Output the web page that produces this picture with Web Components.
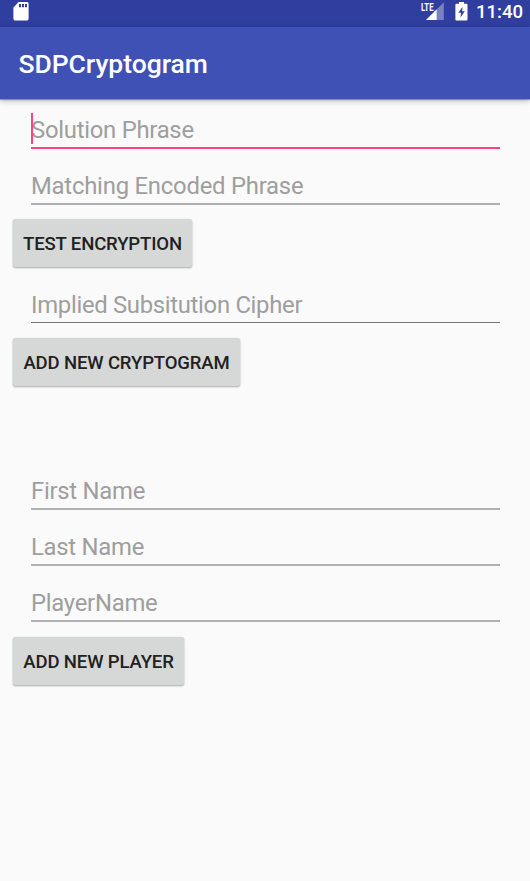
<!DOCTYPE html>
<html lang="en">
<head>
<meta charset="utf-8">
<title>SDPCryptogram</title>
<style>
html,body{margin:0;height:100%;background:#fafafa;font-family:Roboto,"Liberation Sans",sans-serif;overflow:hidden}
</style>
</head>
<body>
<app-screen>
  <status-bar slot="status" time="11:40"></status-bar>
  <app-bar slot="bar">SDPCryptogram</app-bar>
  <text-field focused>Solution Phrase</text-field>
  <text-field style="--ls:-.22px">Matching Encoded Phrase</text-field>
  <raised-button style="--w:179px">TEST ENCRYPTION</raised-button>
  <text-field style="--line:#757575;--lh:1px;--ls:-.3px">Implied Subsitution Cipher</text-field>
  <raised-button style="--w:227px">ADD NEW CRYPTOGRAM</raised-button>
  <form-gap></form-gap>
  <text-field>First Name</text-field>
  <text-field>Last Name</text-field>
  <text-field>PlayerName</text-field>
  <raised-button style="--w:171px;--top:9px">ADD NEW PLAYER</raised-button>
</app-screen>
<script>
const define = (name, html, setup) => {
  const template = document.createElement('template');
  template.innerHTML = html;
  customElements.define(name, class extends HTMLElement {
    constructor() {
      super();
      this.attachShadow({mode: 'open'}).append(template.content.cloneNode(true));
      if (setup) setup(this);
    }
  });
};

define('app-screen', `
<style>
:host{display:flex;flex-direction:column;width:530px;height:881px;background:#fafafa}
main{display:flex;flex-direction:column;align-items:stretch}
</style>
<slot name="status"></slot><slot name="bar"></slot><main><slot></slot></main>`);

define('status-bar', `
<style>
:host{display:flex;height:26.5px;background:#303f9f;color:#fff;padding:0 7px 0 13px;box-sizing:border-box;align-items:flex-start}
svg{display:block;flex:none;overflow:visible}
.sd{margin-top:2px}
.signal{margin:1px 11px 0 auto}
.battery{margin:2px 8px 0 0}
time{font-size:18.6px;font-weight:500;line-height:24px;width:47px;white-space:nowrap;letter-spacing:-.05px}
</style>
<svg class="sd" width="16" height="19" viewBox="0 0 16 19"><path fill="#fff" fill-rule="evenodd" d="M5.6 0H14Q15.6 0 15.6 1.7V16.8Q15.6 18.5 14 18.5H2Q.4 18.5 .4 16.8V5.5ZM6 2V5.2H8V2ZM9 2V5.2H11V2ZM12 2V5.2H14V2Z"/></svg>
<svg class="signal" width="23" height="20" viewBox="0 0 23 20"><path fill="#fff" fill-opacity=".35" d="M22.8 1.2V19H5L13 11V9.5H14.5Z"/><path fill="#fff" d="M15.6 8.4V19H5Z"/><text x="0" y="9.5" fill="#fff" font-family="Roboto" font-size="10.5" font-weight="700" textLength="12.5" lengthAdjust="spacingAndGlyphs">LTE</text></svg>
<svg class="battery" width="13" height="19" viewBox="0 0 13 19"><path fill="#fff" fill-rule="evenodd" d="M4 0H9V1.8H11.3Q12.5 1.8 12.5 2.8V17.5Q12.5 18.5 11.3 18.5H1.5Q.4 18.5 .4 17.5V2.8Q.4 1.8 1.5 1.8H4ZM7.6 4.8L3.3 10.8H6L5.5 15.6L9.8 9.2H7.1Z"/></svg>
<time></time>`, el => { el.shadowRoot.querySelector('time').textContent = el.getAttribute('time'); });

define('app-bar', `
<style>
:host{display:flex;align-items:center;height:72.5px;box-sizing:border-box;padding:2px 18.4px 0;background:#3f51b5;color:#fff;font-size:26.5px;font-weight:500;line-height:32px;letter-spacing:-.03px;box-shadow:0 1px 1px rgba(0,0,0,.3),0 2px 6px rgba(0,0,0,.25);z-index:1}
</style>
<span><slot></slot></span>`);

define('text-field', `
<style>
:host{display:flex;flex-direction:column;justify-content:flex-end;height:56px;box-sizing:border-box;padding:0 30px 6px 31px;color:#9e9e9e;font-size:23.85px;line-height:34px;letter-spacing:var(--ls,-.26px)}
.hint{position:relative;height:32px;margin-bottom:2px;white-space:nowrap}
.rule{height:2px}
.rule::before{content:"";display:block;height:var(--lh,2px);background:var(--line,#b0b0b0)}
:host([focused]) .rule::before{background:#ff4081}
:host([focused]) .hint::before{content:"";position:absolute;left:0;top:0;width:2px;height:31px;background:#ff4081}
</style>
<div class="hint"><slot></slot></div><div class="rule"></div>`);

define('raised-button', `
<style>
:host{display:flex;height:63px;box-sizing:border-box;padding:var(--top,8px) 13px 0}
button{width:var(--w);height:48px;border:0;border-radius:2.5px;padding:2px 0 0;background:#d6d8d7;color:#212121;font:500 18.55px/22px Roboto,"Liberation Sans",sans-serif;letter-spacing:-.14px;white-space:nowrap;box-shadow:0 1px 2px rgba(0,0,0,.32),0 0 1px rgba(0,0,0,.15)}
</style>
<button><slot></slot></button>`);

define('form-gap', `<style>:host{display:block;height:67px}</style>`);
</script>
</body>
</html>
